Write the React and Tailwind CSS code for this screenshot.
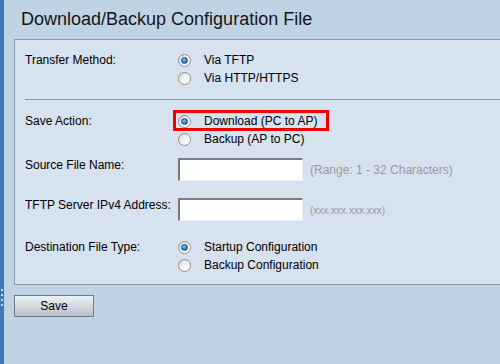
import React from "react";

function Radio({ checked }) {
  return (
    <span className="flex h-[13px] w-[13px] shrink-0 items-center justify-center rounded-full border border-[#8e8e8e] bg-gradient-to-br from-[#d4d4d4] via-[#f4f4f4] to-[#ffffff]">
      {checked && (
        <span className="h-[7px] w-[7px] rounded-full border border-[#1d4f78] bg-[radial-gradient(circle_at_40%_35%,#7cc4f0,#2a7cbf_60%,#1a5a8e)]" />
      )}
    </span>
  );
}

function RadioRow({ checked, label }) {
  return (
    <div className="flex h-[18px] items-center">
      <Radio checked={checked} />
      <span className="ml-[13px]">{label}</span>
    </div>
  );
}

function TextBox() {
  return (
    <div className="h-[23px] w-[125px] border-t-2 border-l-2 border-r border-b border-t-[#7b7b7b] border-l-[#7b7b7b] border-r-[#eef0f2] border-b-[#eef0f2] bg-white" />
  );
}

export default function App() {
  return (
    <div
      className="flex h-[364px] w-[500px] overflow-hidden bg-[#c0d3e5] text-[12px] text-black"
      style={{ fontFamily: '"Liberation Sans", Arial, sans-serif' }}
    >
      {/* splitter strip */}
      <div className="flex w-[4px] shrink-0 flex-col items-center gap-[3px] bg-[#3b78b5] pt-[289px]">
        <span className="h-[2px] w-[2px] bg-[#c9dcef]" />
        <span className="h-[2px] w-[2px] bg-[#c9dcef]" />
        <span className="h-[2px] w-[2px] bg-[#c9dcef]" />
        <span className="h-[2px] w-[2px] bg-[#c9dcef]" />
      </div>

      <div className="flex-1">
        <h1 className="ml-[17px] pt-[9px] text-[18px] leading-[21px] text-[#151515]">
          Download/Backup Configuration File
        </h1>

        <div className="ml-[10px] mt-[9px] w-[600px] border-y border-l border-[#8a9aa6] bg-[#d6e2ee] pb-[10px] pl-[10px] pt-[11px]">
          <div className="flex">
            <div className="w-[153px] leading-[18px]">Transfer Method:</div>
            <div>
              <RadioRow checked label="Via TFTP" />
              <RadioRow label="Via HTTP/HTTPS" />
            </div>
          </div>

          <div className="mt-[12px] h-px bg-[#8a9aa6]" />

          <div className="mt-[12px] flex">
            <div className="w-[153px] leading-[18px]">Save Action:</div>
            <div>
              <div className="relative">
                <RadioRow checked label="Download (PC to AP)" />
                <div className="absolute left-[-5px] top-[-2px] h-[21px] w-[156px] border-[3px] border-[#f00000]" />
              </div>
              <RadioRow label="Backup (AP to PC)" />
            </div>
          </div>

          <div className="mt-[10px] flex items-start">
            <div className="w-[153px] leading-[14px]">Source File Name:</div>
            <div className="flex items-center">
              <TextBox />
              <span className="ml-[7px] text-[#9a9a9a]">(Range: 1 - 32 Characters)</span>
            </div>
          </div>

          <div className="mt-[17px] flex items-start">
            <div className="w-[153px] leading-[14px]">TFTP Server IPv4 Address:</div>
            <div className="flex items-center">
              <TextBox />
              <span className="ml-[7px] pt-[2px] text-[10px] text-[#9a9a9a]">(xxx.xxx.xxx.xxx)</span>
            </div>
          </div>

          <div className="mt-[17px] flex">
            <div className="w-[153px] leading-[18px]">Destination File Type:</div>
            <div>
              <RadioRow checked label="Startup Configuration" />
              <RadioRow label="Backup Configuration" />
            </div>
          </div>
        </div>

        <button className="ml-[10px] mt-[10px] h-[22px] w-[80px] border border-[#6f7b84] bg-gradient-to-b from-[#eef1f3] via-[#d3dade] to-[#b5c0c7] text-[12px] leading-[18px] text-black">
          Save
        </button>
      </div>
    </div>
  );
}
